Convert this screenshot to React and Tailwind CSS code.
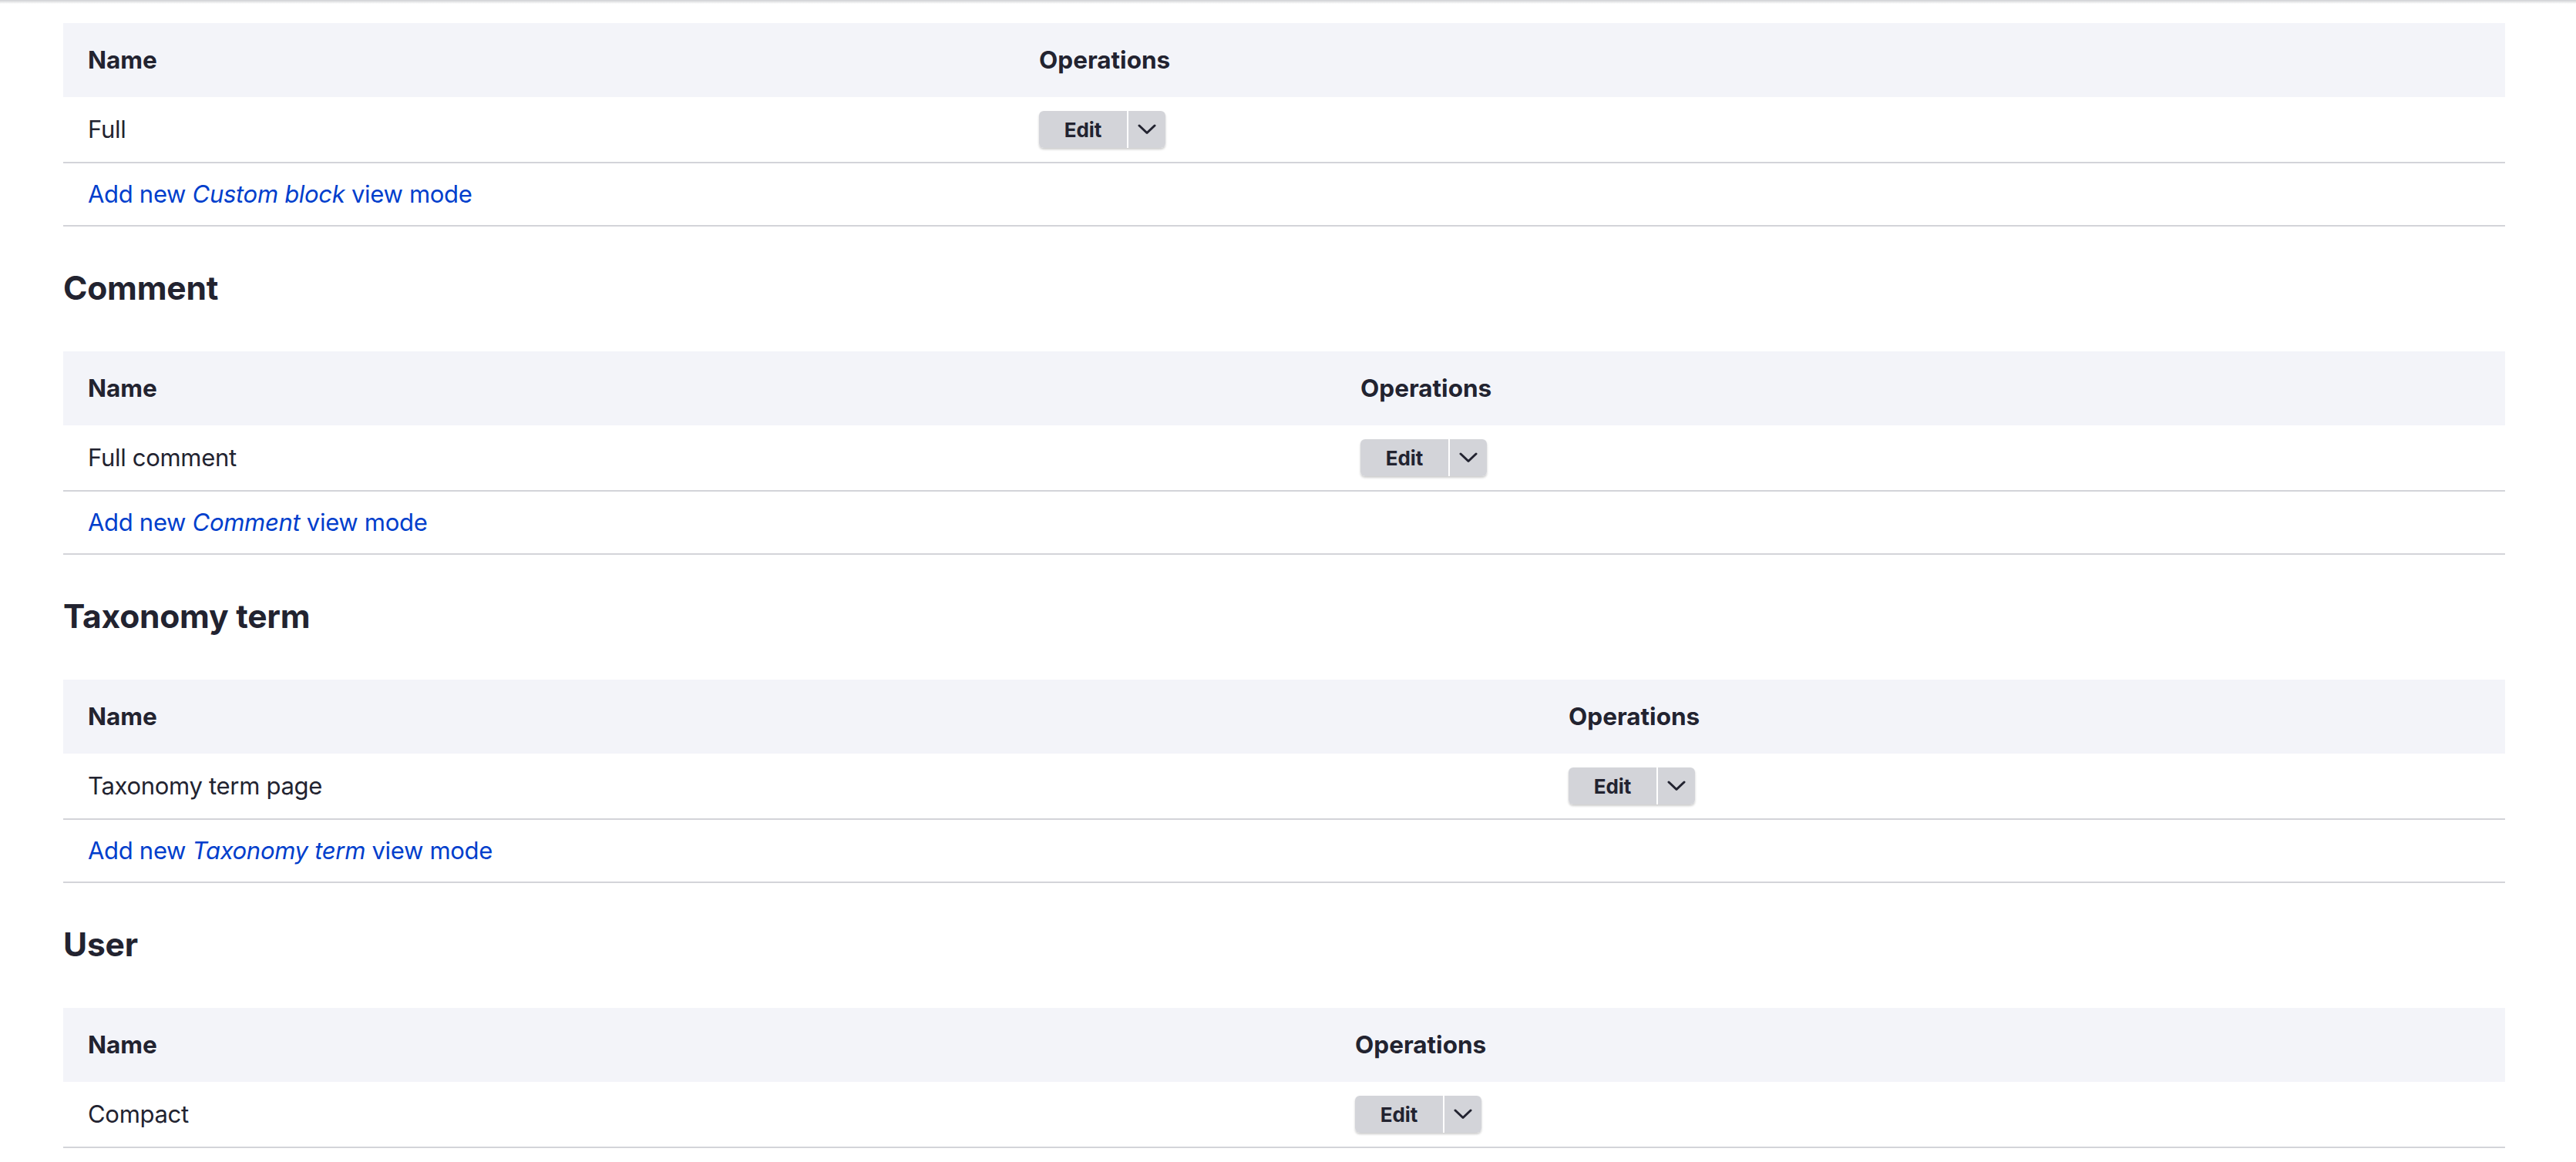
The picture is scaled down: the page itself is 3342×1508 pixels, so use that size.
import React from "react";

const sections = [
  { title: null, name: "Full", entity: "Custom block", colClass: "w-[1234px]" },
  { title: "Comment", name: "Full comment", entity: "Comment", colClass: "w-[1651px]" },
  { title: "Taxonomy term", name: "Taxonomy term page", entity: "Taxonomy term", colClass: "w-[1921px]" },
  { title: "User", name: "Compact", entity: null, colClass: "w-[1644px]" },
];

function EditButton() {
  return (
    <div className="inline-flex rounded-[6px] shadow-[0_2px_3px_rgba(0,0,0,0.2)] align-middle">
      <span className="w-[114px] h-[48px] flex items-center justify-center bg-[#d3d4d9] rounded-l-[6px] text-[26px] font-bold text-[#222330]">
        Edit
      </span>
      <span className="w-[2px] h-[48px] bg-white" />
      <span className="w-[48px] h-[48px] flex items-center justify-center bg-[#d3d4d9] rounded-r-[6px]">
        <svg width="24" height="14" viewBox="0 0 24 14" fill="none">
          <path d="M2 2 L12 11.5 L22 2" stroke="#222330" strokeWidth="3" strokeLinecap="round" strokeLinejoin="round" />
        </svg>
      </span>
    </div>
  );
}

function Section({ s }) {
  return (
    <div>
      {s.title && (
        <h2 className="text-[42.5px] leading-[52px] font-bold tracking-[-0.2px] text-[#222330] mt-[54px] mb-[56px]">
          {s.title}
        </h2>
      )}
      <table className="w-full border-collapse">
        <thead>
          <tr className="bg-[#f3f4f9] h-[96px]">
            <th className={`${s.colClass} pl-[32px] text-left text-[31.5px] font-bold text-[#222330]`}>Name</th>
            <th className="pl-[32px] text-left text-[31.5px] font-bold text-[#222330]">Operations</th>
          </tr>
        </thead>
        <tbody>
          <tr className="h-[85px] border-b-2 border-[#d3d4d9]">
            <td className="pl-[32px] text-[31px] tracking-[-0.3px] text-[#222330]">{s.name}</td>
            <td className="pl-[32px]">
              <EditButton />
            </td>
          </tr>
          {s.entity && (
            <tr className="h-[82px] border-b-2 border-[#d3d4d9]">
              <td colSpan={2} className="pl-[32px] text-[31px] tracking-[-0.3px]">
                <a href="#" className="text-[#003ecc]">
                  Add new <em>{s.entity}</em> view mode
                </a>
              </td>
            </tr>
          )}
        </tbody>
      </table>
    </div>
  );
}

export default function App() {
  return (
    <div className="w-[3342px] h-[1508px] overflow-hidden bg-white font-['Inter',sans-serif]">
      <div className="h-[5px] bg-gradient-to-b from-[#cfd0d3] to-white" />
      <div className="pl-[82px] pr-[92px] pt-[25px]">
        {sections.map((s, i) => (
          <Section key={i} s={s} />
        ))}
      </div>
    </div>
  );
}
